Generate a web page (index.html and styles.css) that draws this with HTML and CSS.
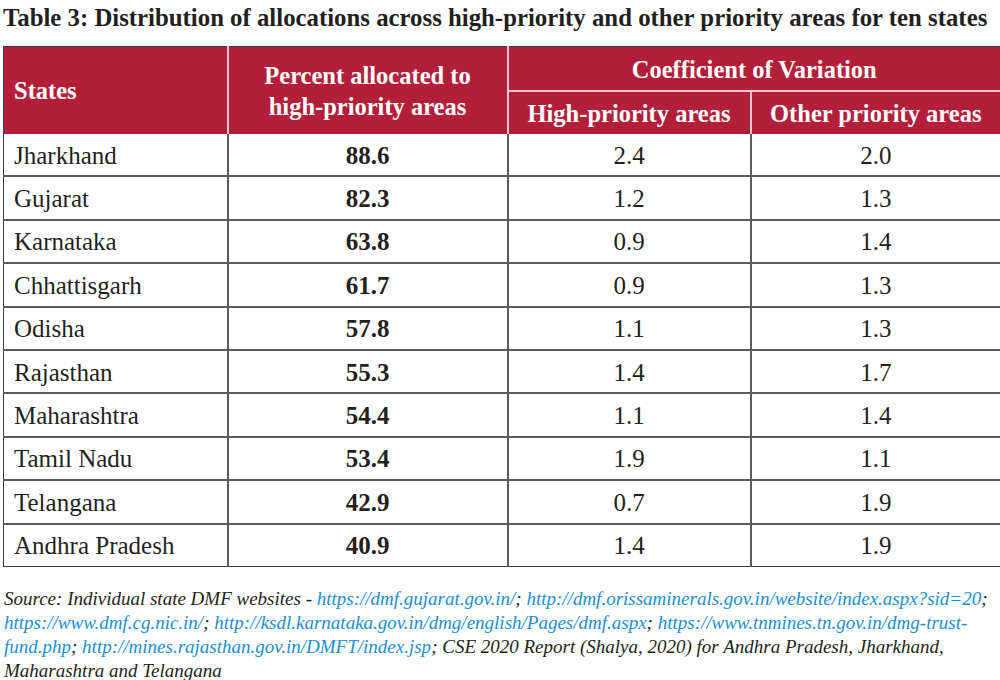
FILE: index.html
```html
<!DOCTYPE html>
<html>
<head>
<meta charset="utf-8">
<link rel="stylesheet" href="styles.css">
</head>
<body>
<div class="page">
  <h1 class="title">Table 3: Distribution of allocations across high-priority and other priority areas for ten states</h1>
  <table class="data">
    <colgroup>
      <col class="c1"><col class="c2"><col class="c3"><col class="c4">
    </colgroup>
    <thead>
      <tr class="h1">
        <th rowspan="2" class="left">States</th>
        <th rowspan="2">Percent allocated to<br>high-priority areas</th>
        <th colspan="2" class="cov">Coefficient of Variation</th>
      </tr>
      <tr class="h2">
        <th class="sub">High-priority areas</th>
        <th class="sub last">Other priority areas</th>
      </tr>
    </thead>
    <tbody>
      <tr><td class="state">Jharkhand</td><td class="pct">88.6</td><td>2.4</td><td>2.0</td></tr>
      <tr><td class="state">Gujarat</td><td class="pct">82.3</td><td>1.2</td><td>1.3</td></tr>
      <tr><td class="state">Karnataka</td><td class="pct">63.8</td><td>0.9</td><td>1.4</td></tr>
      <tr><td class="state">Chhattisgarh</td><td class="pct">61.7</td><td>0.9</td><td>1.3</td></tr>
      <tr><td class="state">Odisha</td><td class="pct">57.8</td><td>1.1</td><td>1.3</td></tr>
      <tr><td class="state">Rajasthan</td><td class="pct">55.3</td><td>1.4</td><td>1.7</td></tr>
      <tr><td class="state">Maharashtra</td><td class="pct">54.4</td><td>1.1</td><td>1.4</td></tr>
      <tr><td class="state">Tamil Nadu</td><td class="pct">53.4</td><td>1.9</td><td>1.1</td></tr>
      <tr><td class="state">Telangana</td><td class="pct">42.9</td><td>0.7</td><td>1.9</td></tr>
      <tr><td class="state">Andhra Pradesh</td><td class="pct">40.9</td><td>1.4</td><td>1.9</td></tr>
    </tbody>
  </table>
  <p class="source">Source: Individual state DMF websites - <span class="link">https://dmf.gujarat.gov.in/</span>; <span class="link">http://dmf.orissaminerals.gov.in/website/index.aspx?sid=20</span>; <span class="link">https://www.dmf.cg.nic.in/</span>; <span class="link">http://ksdl.karnataka.gov.in/dmg/english/Pages/dmf.aspx</span>; <span class="link">https://www.tnmines.tn.gov.in/dmg-trust-fund.php</span>; <span class="link">http://mines.rajasthan.gov.in/DMFT/index.jsp</span>; CSE 2020 Report (Shalya, 2020) for Andhra Pradesh, Jharkhand, Maharashtra and Telangana</p>
</div>
</body>
</html>
```

FILE: styles.css
```css
html, body {
  margin: 0;
  padding: 0;
  background: #ffffff;
}

.page {
  width: 1000px;
  height: 680px;
  padding: 0 0 0 3px;
  box-sizing: border-box;
  font-family: "Liberation Serif", "DejaVu Serif", serif;
  color: #231f20;
  overflow: hidden;
}

.title {
  margin: 0;
  padding-top: 2px;
  font-size: 24.8px;
  line-height: 32px;
  font-weight: bold;
  color: #231f20;
  white-space: nowrap;
}

.data {
  margin-top: 12px;
  width: 997px;
  border-collapse: collapse;
  table-layout: fixed;
  border: 1px solid #3b3b3b;
}

.c1 { width: 224px; }
.c2 { width: 280px; }
.c3 { width: 243px; }
.c4 { width: 250px; }

.data th {
  background: #b31e3a;
  color: #ffffff;
  font-weight: bold;
  font-size: 24.5px;
  line-height: 31px;
  text-align: center;
  padding: 0;
  border-left: 2px solid #f2c9d0;
}

.data th.left {
  text-align: left;
  padding-left: 10px;
  border-left: none;
}

.h1 th.cov {
  height: 42px;
  padding-top: 1px;
  border-bottom: 2px solid #f2c9d0;
}

.h2 th {
  height: 42px;
}

.data td {
  height: 39.4px;
  padding: 2px 0 0 0;
  font-size: 25px;
  line-height: 28px;
  text-align: center;
  border: 2px solid #5c5c5c;
  border-top: none;
}

.data tr:last-child td {
  border-bottom: 1px solid #3b3b3b;
}

.data td.state {
  text-align: left;
  padding-left: 10px;
  border-left: none;
}

.data td:last-child {
  border-right: none;
}

.data td.pct {
  font-weight: bold;
}

.source {
  margin: 20px 0 0 1px;
  font-style: italic;
  font-size: 19px;
  line-height: 24px;
  color: #231f20;
  width: 992px;
}

.link {
  color: #1b8fd2;
}
```
